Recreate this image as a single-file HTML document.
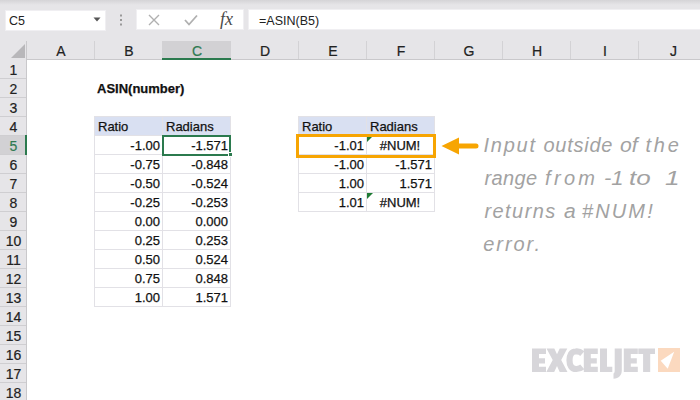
<!DOCTYPE html><html><head><meta charset="utf-8"><style>
*{margin:0;padding:0;box-sizing:border-box}
html,body{width:700px;height:400px;overflow:hidden;background:#fff;font-family:"Liberation Sans",sans-serif;position:relative}
.a{position:absolute}
.tb{left:0;top:0;width:700px;height:41px;background:#e6e5e8}
.tbtop{left:0;top:0;width:700px;height:5px;background:linear-gradient(#d5d4d7,#e6e5e8)}
.box{background:#fff;border:1px solid #f0eff2}
.hdr{left:26px;top:41px;width:674px;height:19px;background:#e6e5e8;border-bottom:1px solid #c9c8cb}
.rhdr{left:0;top:41px;width:27px;height:359px;background:#e6e5e8;border-right:1px solid #c9c8cb}
.ch{top:41px;height:18px;font-size:14px;color:#222;-webkit-text-stroke:0.2px currentColor;text-align:center;line-height:20px}
.cl{top:41px;width:1px;height:18px;background:#d3d2d5}
.rl{left:0;width:26px;height:1px;background:#cfced1}
.rn{left:0;width:27px;height:19px;font-size:14px;color:#222;-webkit-text-stroke:0.2px currentColor;text-align:center;line-height:20px}
.t{font-size:13px;color:#111;-webkit-text-stroke:0.25px #111;height:19px;line-height:20px;white-space:nowrap}
.r{text-align:right}
</style></head><body><div class="a tb"></div><div class="a tbtop"></div><div class="a box" style="left:5px;top:10px;width:101px;height:21px"></div><div class="a" style="left:9px;top:11px;height:20px;line-height:21px;font-size:12.5px;color:#222">C5</div><svg class="a" style="left:92px;top:16px" width="10" height="6"><path d="M1.5 1.5H8.5L5 5.5Z" fill="#555"/></svg><svg class="a" style="left:119px;top:14px" width="4" height="12"><rect x="1" y="0.5" width="2" height="2" fill="#999"/><rect x="1" y="5" width="2" height="2" fill="#999"/><rect x="1" y="9.5" width="2" height="2" fill="#999"/></svg><div class="a box" style="left:136px;top:9px;width:108px;height:21px"></div><svg class="a" style="left:146px;top:13px" width="16" height="14"><path d="M3 2L13 12M13 2L3 12" stroke="#b0b0b0" stroke-width="1.4" fill="none"/></svg><svg class="a" style="left:183px;top:13px" width="16" height="14"><path d="M2 7L6 11.5L14 2.5" stroke="#b0b0b0" stroke-width="1.8" fill="none"/></svg><div class="a" style="left:220px;top:9px;height:20px;line-height:21px;font-family:'Liberation Serif',serif;font-style:italic;font-size:18px;letter-spacing:0;color:#4a4a4a">fx</div><div class="a box" style="left:248px;top:9px;width:460px;height:21px"></div><div class="a" style="left:259px;top:11px;height:20px;line-height:21px;font-size:12.5px;color:#222">=ASIN(B5)</div><div class="a hdr"></div><div class="a rhdr"></div><svg class="a" style="left:9px;top:43px" width="17" height="16"><path d="M16 1V15H2Z" fill="#b8b7ba"/></svg><div class="a" style="left:162px;top:41px;width:69px;height:18px;background:#d2d1d4"></div><div class="a" style="left:162px;top:58px;width:69px;height:2px;background:#2b7a4e"></div><div class="a ch" style="left:27px;width:68px;color:#222">A</div><div class="a ch" style="left:95px;width:68px;color:#222">B</div><div class="a cl" style="left:94px"></div><div class="a ch" style="left:163px;width:68px;color:#2f7a52">C</div><div class="a ch" style="left:231px;width:68px;color:#222">D</div><div class="a ch" style="left:299px;width:68px;color:#222">E</div><div class="a cl" style="left:298px"></div><div class="a ch" style="left:367px;width:68px;color:#222">F</div><div class="a cl" style="left:366px"></div><div class="a ch" style="left:435px;width:68px;color:#222">G</div><div class="a cl" style="left:434px"></div><div class="a ch" style="left:503px;width:68px;color:#222">H</div><div class="a cl" style="left:502px"></div><div class="a ch" style="left:571px;width:68px;color:#222">I</div><div class="a cl" style="left:570px"></div><div class="a ch" style="left:639px;width:69px;color:#222">J</div><div class="a cl" style="left:638px"></div><div class="a rn" style="top:60px;color:#222">1</div><div class="a rl" style="top:78px"></div><div class="a rn" style="top:79px;color:#222">2</div><div class="a rl" style="top:97px"></div><div class="a rn" style="top:98px;color:#222">3</div><div class="a rl" style="top:116px"></div><div class="a rn" style="top:117px;color:#222">4</div><div class="a rl" style="top:135px"></div><div class="a rn" style="top:136px;background:#d2d1d4;color:#2f7a52">5</div><div class="a rl" style="top:154px"></div><div class="a rn" style="top:155px;color:#222">6</div><div class="a rl" style="top:173px"></div><div class="a rn" style="top:174px;color:#222">7</div><div class="a rl" style="top:192px"></div><div class="a rn" style="top:193px;color:#222">8</div><div class="a rl" style="top:211px"></div><div class="a rn" style="top:212px;color:#222">9</div><div class="a rl" style="top:230px"></div><div class="a rn" style="top:231px;color:#222">10</div><div class="a rl" style="top:249px"></div><div class="a rn" style="top:250px;color:#222">11</div><div class="a rl" style="top:268px"></div><div class="a rn" style="top:269px;color:#222">12</div><div class="a rl" style="top:287px"></div><div class="a rn" style="top:288px;color:#222">13</div><div class="a rl" style="top:306px"></div><div class="a rn" style="top:307px;color:#222">14</div><div class="a rl" style="top:325px"></div><div class="a rn" style="top:326px;color:#222">15</div><div class="a rl" style="top:344px"></div><div class="a rn" style="top:345px;color:#222">16</div><div class="a rl" style="top:363px"></div><div class="a rn" style="top:364px;color:#222">17</div><div class="a rl" style="top:382px"></div><div class="a rn" style="top:383px;color:#222">18</div><div class="a rl" style="top:401px"></div><div class="a" style="left:25px;top:135px;width:2px;height:20px;background:#2b7a4e"></div><div class="a t" style="left:97px;top:79px;font-weight:bold">ASIN(number)</div><div class="a" style="left:94px;top:116px;width:137px;height:20px;background:#d9e0f2"></div><div class="a" style="left:94px;top:116px;width:137px;height:1px;background:#e2e1e6"></div><div class="a" style="left:94px;top:135px;width:137px;height:1px;background:#e2e1e6"></div><div class="a" style="left:94px;top:154px;width:137px;height:1px;background:#e2e1e6"></div><div class="a" style="left:94px;top:173px;width:137px;height:1px;background:#e2e1e6"></div><div class="a" style="left:94px;top:192px;width:137px;height:1px;background:#e2e1e6"></div><div class="a" style="left:94px;top:211px;width:137px;height:1px;background:#e2e1e6"></div><div class="a" style="left:94px;top:230px;width:137px;height:1px;background:#e2e1e6"></div><div class="a" style="left:94px;top:249px;width:137px;height:1px;background:#e2e1e6"></div><div class="a" style="left:94px;top:268px;width:137px;height:1px;background:#e2e1e6"></div><div class="a" style="left:94px;top:287px;width:137px;height:1px;background:#e2e1e6"></div><div class="a" style="left:94px;top:306px;width:137px;height:1px;background:#e2e1e6"></div><div class="a" style="left:94px;top:116px;width:1px;height:191px;background:#e2e1e6"></div><div class="a" style="left:162px;top:116px;width:1px;height:191px;background:#e2e1e6"></div><div class="a" style="left:230px;top:116px;width:1px;height:191px;background:#e2e1e6"></div><div class="a t" style="left:98px;top:117px">Ratio</div><div class="a t" style="left:166px;top:117px">Radians</div><div class="a t r" style="left:94px;width:66px;top:136px">-1.00</div><div class="a t" style="left:162px;width:66px;top:136px;text-align:right">-1.571</div><div class="a t r" style="left:94px;width:66px;top:155px">-0.75</div><div class="a t" style="left:162px;width:66px;top:155px;text-align:right">-0.848</div><div class="a t r" style="left:94px;width:66px;top:174px">-0.50</div><div class="a t" style="left:162px;width:66px;top:174px;text-align:right">-0.524</div><div class="a t r" style="left:94px;width:66px;top:193px">-0.25</div><div class="a t" style="left:162px;width:66px;top:193px;text-align:right">-0.253</div><div class="a t r" style="left:94px;width:66px;top:212px">0.00</div><div class="a t" style="left:162px;width:66px;top:212px;text-align:right">0.000</div><div class="a t r" style="left:94px;width:66px;top:231px">0.25</div><div class="a t" style="left:162px;width:66px;top:231px;text-align:right">0.253</div><div class="a t r" style="left:94px;width:66px;top:250px">0.50</div><div class="a t" style="left:162px;width:66px;top:250px;text-align:right">0.524</div><div class="a t r" style="left:94px;width:66px;top:269px">0.75</div><div class="a t" style="left:162px;width:66px;top:269px;text-align:right">0.848</div><div class="a t r" style="left:94px;width:66px;top:288px">1.00</div><div class="a t" style="left:162px;width:66px;top:288px;text-align:right">1.571</div><div class="a" style="left:298px;top:116px;width:137px;height:20px;background:#d9e0f2"></div><div class="a" style="left:298px;top:116px;width:137px;height:1px;background:#e2e1e6"></div><div class="a" style="left:298px;top:135px;width:137px;height:1px;background:#e2e1e6"></div><div class="a" style="left:298px;top:154px;width:137px;height:1px;background:#e2e1e6"></div><div class="a" style="left:298px;top:173px;width:137px;height:1px;background:#e2e1e6"></div><div class="a" style="left:298px;top:192px;width:137px;height:1px;background:#e2e1e6"></div><div class="a" style="left:298px;top:211px;width:137px;height:1px;background:#e2e1e6"></div><div class="a" style="left:298px;top:116px;width:1px;height:96px;background:#e2e1e6"></div><div class="a" style="left:366px;top:116px;width:1px;height:96px;background:#e2e1e6"></div><div class="a" style="left:434px;top:116px;width:1px;height:96px;background:#e2e1e6"></div><div class="a t" style="left:302px;top:117px">Ratio</div><div class="a t" style="left:370px;top:117px">Radians</div><div class="a t r" style="left:298px;width:66px;top:136px">-1.01</div><div class="a t" style="left:366px;width:68px;top:136px;text-align:center">#NUM!</div><div class="a t r" style="left:298px;width:66px;top:155px">-1.00</div><div class="a t" style="left:366px;width:66px;top:155px;text-align:right">-1.571</div><div class="a t r" style="left:298px;width:66px;top:174px">1.00</div><div class="a t" style="left:366px;width:66px;top:174px;text-align:right">1.571</div><div class="a t r" style="left:298px;width:66px;top:193px">1.01</div><div class="a t" style="left:366px;width:68px;top:193px;text-align:center">#NUM!</div><div class="a" style="left:162px;top:135px;width:69px;height:21px;border:2px solid #2b7a4e"></div><div class="a" style="left:228px;top:152px;width:5px;height:5px;background:#2b7a4e;border:1px solid #fff"></div><svg class="a" style="left:367px;top:136px" width="6" height="6"><path d="M0 0H6L0 6Z" fill="#1e7b34"/></svg><svg class="a" style="left:367px;top:193px" width="6" height="6"><path d="M0 0H6L0 6Z" fill="#1e7b34"/></svg><div class="a" style="left:296px;top:134px;width:140px;height:24px;border:3px solid #f7a502"></div><svg class="a" style="left:440px;top:135px" width="40" height="22"><path d="M1.5 11L19 2.5V8.5H36a2.5 2.5 0 0 1 0 5H19V19.5Z" fill="#f7a502"/></svg><div class="a" style="left:483.5px;top:129px;font-size:20px;line-height:32px;color:#a2a2a2;font-style:italic;white-space:nowrap;letter-spacing:1.75px">Input</div><div class="a" style="left:543.5px;top:129px;font-size:20px;line-height:32px;color:#a2a2a2;font-style:italic;white-space:nowrap;letter-spacing:0.75px">outside</div><div class="a" style="left:620.0px;top:129px;font-size:20px;line-height:32px;color:#a2a2a2;font-style:italic;white-space:nowrap;transform:scaleX(1.059);transform-origin:0 0">of</div><div class="a" style="left:645.5px;top:129px;font-size:20px;line-height:32px;color:#a2a2a2;font-style:italic;white-space:nowrap;letter-spacing:2.75px">the</div><div class="a" style="left:484.5px;top:162px;font-size:20px;line-height:32px;color:#a2a2a2;font-style:italic;white-space:nowrap;letter-spacing:0.38px">range</div><div class="a" style="left:545.0px;top:162px;font-size:20px;line-height:32px;color:#a2a2a2;font-style:italic;white-space:nowrap;letter-spacing:3.33px">from</div><div class="a" style="left:603.5px;top:162px;font-size:20px;line-height:32px;color:#a2a2a2;font-style:italic;white-space:nowrap;transform:scaleX(1.100);transform-origin:0 0">-1</div><div class="a" style="left:629.0px;top:162px;font-size:20px;line-height:32px;color:#a2a2a2;font-style:italic;white-space:nowrap;transform:scaleX(1.300);transform-origin:0 0">to</div><div class="a" style="left:665.0px;top:162px;font-size:20px;line-height:32px;color:#a2a2a2;font-style:italic;white-space:nowrap;transform:scaleX(1.312);transform-origin:0 0">1</div><div class="a" style="left:484.5px;top:195px;font-size:20px;line-height:32px;color:#a2a2a2;font-style:italic;white-space:nowrap;letter-spacing:1.42px">returns</div><div class="a" style="left:564.0px;top:195px;font-size:20px;line-height:32px;color:#a2a2a2;font-style:italic;white-space:nowrap;transform:scaleX(1.050);transform-origin:0 0">a</div><div class="a" style="left:582.0px;top:195px;font-size:20px;line-height:32px;color:#a2a2a2;font-style:italic;white-space:nowrap;letter-spacing:2.12px">#NUM!</div><div class="a" style="left:483.3px;top:228px;font-size:20px;line-height:32px;color:#a2a2a2;font-style:italic;white-space:nowrap;letter-spacing:1.92px">error.</div><svg class="a" style="left:0;top:0" width="700" height="400" fill="#d7d6da"><path d="M532 348.6H546V354H539V358.3H545V363.6H539V366.7H546V372H532Z"/><path d="M546.5 348.6H554.3L557 354.3L559.7 348.6H567.3L561.2 360L567.5 372H559.7L557 366L554.2 372H546.3L552.7 360Z"/><path d="M582.3 353.6A8.4 8.4 0 0 0 575.6 351.5C571.2 351.5 569.5 355.5 569.5 360.3C569.5 365.2 571.5 369 576 369A9 9 0 0 0 582.3 366.8" fill="none" stroke="#d7d6da" stroke-width="6.2"/><path d="M583.8 348.6H597.8V354H590.8V358.3H596.8V363.6H590.8V366.7H597.8V372H583.8Z"/><path d="M600 348.6H607V366.7H612.3V372H600Z"/><path d="M614.7 348.6H621.8V370C621.8 375.5 619 378.5 613.5 378.8V373.5C614.5 373 614.7 372 614.7 370Z"/><path d="M623.8 348.6H637.8V354H630.8V358.3H636.8V363.6H630.8V366.7H637.8V372H623.8Z"/><path d="M638.3 348.6H655V354H650.2V372H643.1V354H638.3Z"/></svg><div class="a" style="left:658px;top:348px;width:22px;height:24px;background:#fbd9bf"></div><svg class="a" style="left:658px;top:348px" width="22" height="24"><path d="M16.2 3.7L2.7 12.7L9.7 20.7Z" fill="#fff"/></svg></body></html>
